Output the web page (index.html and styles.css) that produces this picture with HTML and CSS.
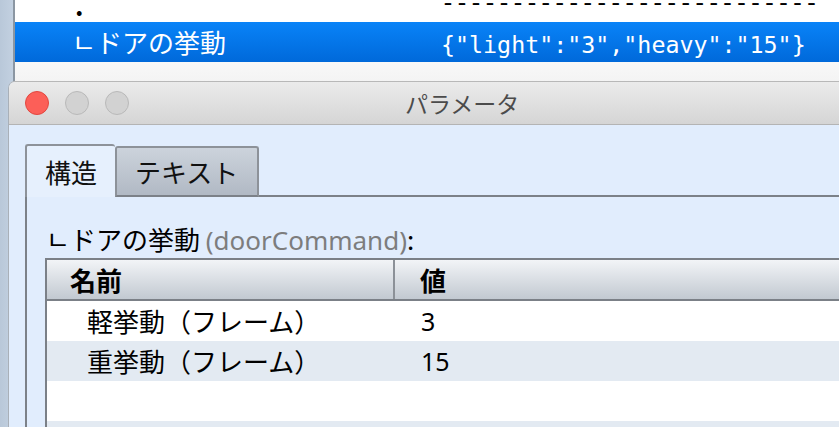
FILE: index.html
```html
<!DOCTYPE html>
<html lang="ja">
<head>
<meta charset="utf-8">
<title>パラメータ</title>
<link rel="stylesheet" href="styles.css">
</head>
<body>
<div class="desktop">
  <div class="backwin">
    <div class="list">
      <div class="lrow"><span class="lname dot">.</span><span class="lval dashes">---------------------------</span></div>
      <div class="lrow sel"><span class="lname">ㄴドアの挙動</span><span class="lval">{"light":"3","heavy":"15"}</span></div>
      <div class="lrow blank"></div>
    </div>
  </div>
  <div class="dialog">
    <div class="titlebar">
      <div class="lights">
        <span class="light close"></span>
        <span class="light"></span>
        <span class="light"></span>
      </div>
      <div class="title">パラメータ</div>
    </div>
    <div class="content">
      <div class="tabs">
        <div class="tab active">構造</div>
        <div class="tab">テキスト</div>
        <div class="tabfill"></div>
      </div>
      <div class="panel">
        <div class="label">ㄴドアの挙動 <span class="key">(doorCommand)</span>:</div>
        <div class="table">
          <div class="thead">
            <div class="th c1">名前</div>
            <div class="th c2">値</div>
          </div>
          <div class="tr"><div class="td c1">軽挙動（フレーム）</div><div class="td c2">3</div></div>
          <div class="tr alt"><div class="td c1">重挙動（フレーム）</div><div class="td c2">15</div></div>
          <div class="tr"><div class="td c1"></div><div class="td c2"></div></div>
          <div class="tr alt"><div class="td c1"></div><div class="td c2"></div></div>
        </div>
      </div>
    </div>
  </div>
</div>
</body>
</html>
```
FILE: styles.css
```css
html, body {
  margin: 0;
  padding: 0;
}
body {
  width: 839px;
  height: 427px;
  overflow: hidden;
  font-family: "Noto Sans CJK JP", "Noto Sans", sans-serif;
  background: #a3b1c0;
}
.desktop {
  position: relative;
  width: 839px;
  height: 427px;
  overflow: hidden;
  background: linear-gradient(90deg, #b9c8d9 0, #c3d1e1 14px);
}
.backwin {
  position: absolute;
  left: 13px;
  top: -18px;
  width: 900px;
  height: 200px;
  border-left: 2px solid #8b96a2;
  background: #f4f4f4;
}
.list {
  display: flex;
  flex-direction: column;
}
.lrow {
  height: 40px;
  display: flex;
  align-items: baseline;
  background: #fff;
  line-height: 40px;
  font-size: 26px;
  color: #000;
}
.lrow.sel {
  background: linear-gradient(#0983f8, #0069da);
  color: #fff;
}
.lrow.blank {
  background: linear-gradient(#f8f8f8, #efefef);
}
.lname {
  width: 426px;
  padding-left: 57px;
  box-sizing: border-box;
  flex: none;
}
.lname.dot {
  padding-left: 60px;
  position: relative;
  top: 3px;
  font-weight: bold;
}
.lval {
  font-family: "DejaVu Sans Mono", monospace;
  font-size: 23.3px;
}
.lval.dashes {
  font-family: "Liberation Mono", monospace;
  position: relative;
  top: -3px;
}
.dialog {
  position: absolute;
  left: 8px;
  top: 81px;
  width: 900px;
  height: 400px;
  border-top-left-radius: 7px;
  overflow: hidden;
  border-left: 1px solid #a9b0b8;
  border-top: 1px solid #b8b8b8;
  background: #e1edfd;
}
.titlebar {
  height: 42px;
  display: flex;
  align-items: center;
  background: linear-gradient(#ebebeb, #d5d5d5);
  border-bottom: 1px solid #b4b4b4;
  position: relative;
}
.lights {
  display: flex;
  gap: 16px;
  padding-left: 16px;
}
.light {
  width: 22px;
  height: 22px;
  border-radius: 50%;
  background: #d2d2d2;
  border: 1px solid #b9b9b9;
}
.light.close {
  background: #fc5f58;
  border-color: #e2473f;
}
.title {
  position: absolute;
  left: 396px;
  top: 0;
  line-height: 42px;
  font-size: 23px;
  color: #4b4b4b;
}
.content {
  padding: 19px 0 0 16px;
}
.tabs {
  display: flex;
  align-items: flex-end;
  height: 53px;
}
.tab {
  box-sizing: border-box;
  display: flex;
  align-items: center;
  font-size: 26px;
  color: #111;
  border: 2px solid #8d9299;
  border-radius: 3px 3px 0 0;
}
.tab.active {
  height: 53px;
  background: #e6f0fd;
  border-bottom: none;
  border-right: none;
  padding: 0 18px 0 18px;
}
.tab:not(.active) {
  height: 51px;
  padding: 0 19px 0 18px;
  background: linear-gradient(#ccd3dc, #b1b9c4);
  border-bottom: 2px solid #7c8188;
}
.tabfill {
  flex: 1;
  height: 2px;
  background: #7c8188;
}
.panel {
  border-left: 2px solid #7c8188;
  background: #e1edfd;
  padding: 24px 0 0 18px;
  height: 300px;
}
.label {
  font-size: 26px;
  line-height: 36px;
  color: #000;
  padding-left: 1px;
}
.label .key {
  color: #7d7d7d;
  font-family: "Noto Sans", sans-serif;
}
.table {
  border-top: 2px solid #7b8087;
  border-left: 2px solid #7b8087;
  background: #fff;
}
.thead {
  display: flex;
  height: 39px;
  background: linear-gradient(#f2f4f7, #c2c9d1);
  border-bottom: 2px solid #7b8087;
}
.th {
  font-size: 26px;
  font-weight: bold;
  line-height: 39px;
  color: #000;
}
.thead .c1 {
  width: 348px;
  padding-left: 23px;
  box-sizing: border-box;
  border-right: 2px solid #8c9198;
}
.thead .c2 {
  padding-left: 25px;
}
.tr {
  display: flex;
  height: 40px;
  background: #fff;
}
.tr.alt {
  background: #e3eaf2;
}
.td {
  font-size: 26px;
  line-height: 40px;
  color: #000;
}
.tr .c1 {
  width: 348px;
  padding-left: 40px;
  box-sizing: border-box;
}
.tr .c2 {
  padding-left: 26px;
  font-family: "Noto Sans", sans-serif;
  font-size: 25px;
}
```
